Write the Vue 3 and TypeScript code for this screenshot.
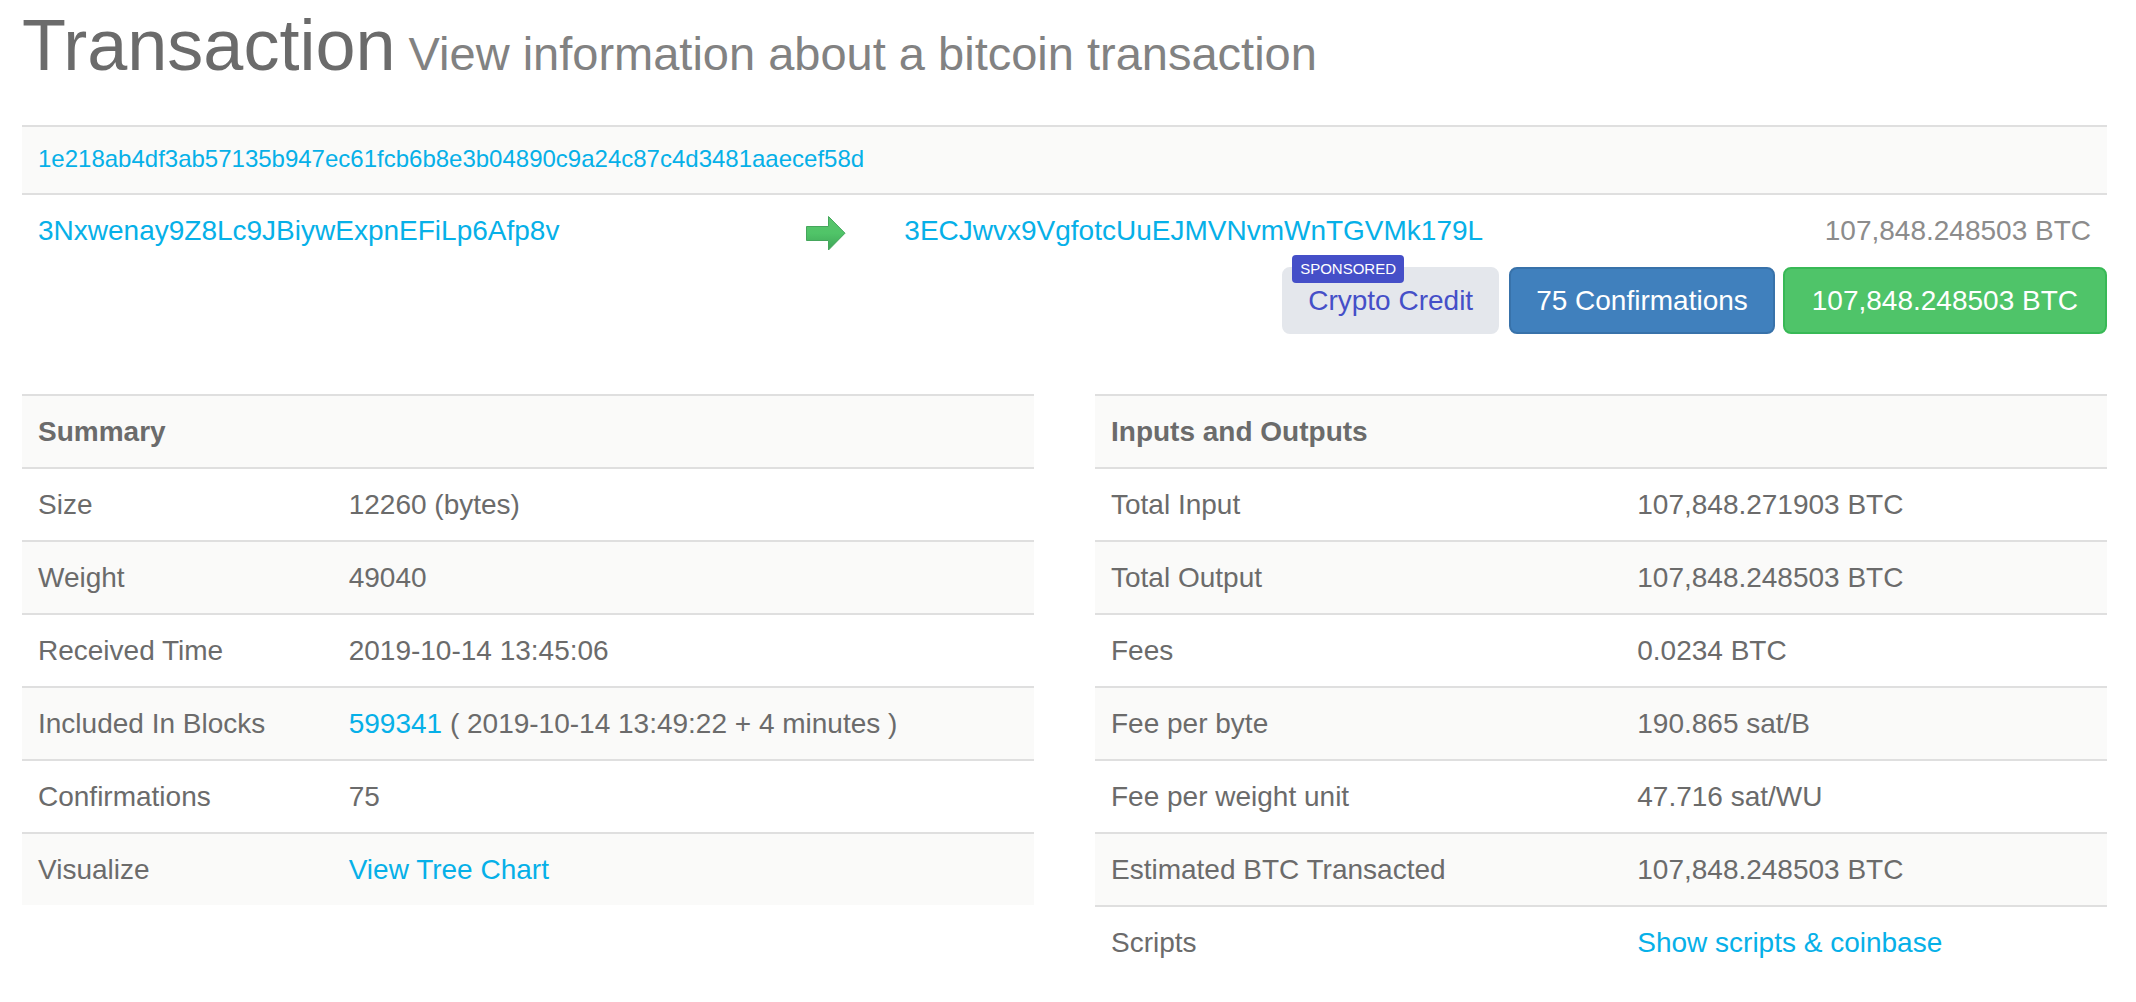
<script setup lang="ts">
interface Row {
  label: string
  value: string
  link?: string
}

const hash = '1e218ab4df3ab57135b947ec61fcb6b8e3b04890c9a24c87c4d3481aaecef58d'
const source = '3Nxwenay9Z8Lc9JBiywExpnEFiLp6Afp8v'
const target = '3ECJwvx9VgfotcUuEJMVNvmWnTGVMk179L'
const amount = '107,848.248503 BTC'

const summary: Row[] = [
  { label: 'Size', value: '12260 (bytes)' },
  { label: 'Weight', value: '49040' },
  { label: 'Received Time', value: '2019-10-14 13:45:06' },
  { label: 'Included In Blocks', link: '599341', value: '( 2019-10-14 13:49:22 + 4 minutes )' },
  { label: 'Confirmations', value: '75' },
  { label: 'Visualize', link: 'View Tree Chart', value: '' },
]

const totals: Row[] = [
  { label: 'Total Input', value: '107,848.271903 BTC' },
  { label: 'Total Output', value: '107,848.248503 BTC' },
  { label: 'Fees', value: '0.0234 BTC' },
  { label: 'Fee per byte', value: '190.865 sat/B' },
  { label: 'Fee per weight unit', value: '47.716 sat/WU' },
  { label: 'Estimated BTC Transacted', value: '107,848.248503 BTC' },
  { label: 'Scripts', link: 'Show scripts & coinbase', value: '' },
]

const panels = [
  { title: 'Summary', kind: 'summary', rows: summary },
  { title: 'Inputs and Outputs', kind: 'totals', rows: totals },
]
</script>

<template>
  <main class="page">
    <h1>Transaction<small> View information about a bitcoin transaction</small></h1>

    <table class="transfer">
      <colgroup>
        <col class="col-source" />
        <col class="col-arrow" />
        <col />
        <col class="col-amount" />
      </colgroup>
      <thead>
        <tr>
          <th colspan="4" class="hash"><a href="#">{{ hash }}</a></th>
        </tr>
      </thead>
      <tbody>
        <tr>
          <td><a href="#">{{ source }}</a></td>
          <td class="arrow">
            <svg width="40" height="36" viewBox="0 0 40 36" role="img" aria-label="to">
              <defs>
                <linearGradient id="arrow-fill" x1="0" y1="0" x2="0" y2="1">
                  <stop offset="0" stop-color="#5ac46c" />
                  <stop offset="0.5" stop-color="#50c468" />
                  <stop offset="1" stop-color="#3ea457" />
                </linearGradient>
              </defs>
              <path
                d="M0.5 11.5H22.5V1.5L39 18.2L22.5 35V25.5H0.5Z"
                fill="url(#arrow-fill)"
                stroke="#45a65c"
                stroke-width="1"
              />
            </svg>
          </td>
          <td><a href="#">{{ target }}</a></td>
          <td class="amount">{{ amount }}</td>
        </tr>
      </tbody>
    </table>

    <div class="actions">
      <a href="#" class="btn sponsor"><span class="badge">SPONSORED</span>Crypto Credit</a>
      <button type="button" class="btn confirmations">75 Confirmations</button>
      <button type="button" class="btn total">{{ amount }}</button>
    </div>

    <div class="panels">
      <table v-for="panel in panels" :key="panel.kind" :class="['details', panel.kind]">
        <colgroup>
          <col class="col-label" />
          <col />
        </colgroup>
        <thead>
          <tr>
            <th colspan="2">{{ panel.title }}</th>
          </tr>
        </thead>
        <tbody>
          <tr v-for="row in panel.rows" :key="row.label">
            <td>{{ row.label }}</td>
            <td><a v-if="row.link" href="#">{{ row.link }}</a> {{ row.value }}</td>
          </tr>
        </tbody>
      </table>
    </div>
  </main>
</template>

<style>
body {
  margin: 0;
  background: #fff;
}
</style>

<style scoped>
.page {
  padding: 0 29px 40px 22px;
  font: 28px/39px "Liberation Sans", Arial, sans-serif;
  color: #6b6b6b;
}

h1 {
  margin: 0 0 26px;
  font-size: 72px;
  font-weight: 400;
  line-height: 90px;
}

small {
  font-size: 47px;
  color: #828282;
}

a {
  color: #06b0e8;
  text-decoration: none;
}

table {
  width: 100%;
  border-collapse: separate;
  border-spacing: 0;
  table-layout: fixed;
}

th,
td {
  padding: 16px;
  border-top: 2px solid #dfdfdf;
  text-align: left;
  vertical-align: top;
}

th {
  background: #fafaf9;
}

.col-source {
  width: 36.85%;
}

.col-arrow {
  width: 98px;
}

.col-amount {
  width: 320px;
}

.hash {
  padding-bottom: 18px;
  font-size: 24px;
  font-weight: 400;
  line-height: 32px;
}

.arrow svg {
  display: block;
  margin-top: 4px;
}

.amount {
  text-align: right;
  color: #8c8c8c;
}

.actions {
  display: flex;
  justify-content: flex-end;
  gap: 8px;
}

.btn {
  position: relative;
  padding: 12px 24px;
  border: 2px solid;
  border-radius: 8px;
  font: inherit;
  color: #fff;
  white-space: nowrap;
}

.sponsor {
  margin-right: 2px;
  color: #454fc8;
  background: #e4e7ec;
  border-color: #e4e7ec;
}

.badge {
  position: absolute;
  top: -14px;
  left: 8px;
  padding: 0 8px;
  border-radius: 4px;
  font-size: 15px;
  line-height: 28px;
  color: #fff;
  background: #454fc8;
}

.confirmations {
  padding: 12px 25px;
  background: #4080bd;
  border-color: #3872aa;
}

.total {
  padding: 12px 27px;
  background: #4fc469;
  border-color: #38b956;
}

.panels {
  display: grid;
  grid-template-columns: 1fr 1fr;
  align-items: start;
  gap: 61px;
  margin-top: 60px;
}

.details tbody tr:nth-child(even) {
  background: #fafaf9;
}

.summary .col-label {
  width: 30.7%;
}

.totals .col-label {
  width: 52%;
}
</style>
